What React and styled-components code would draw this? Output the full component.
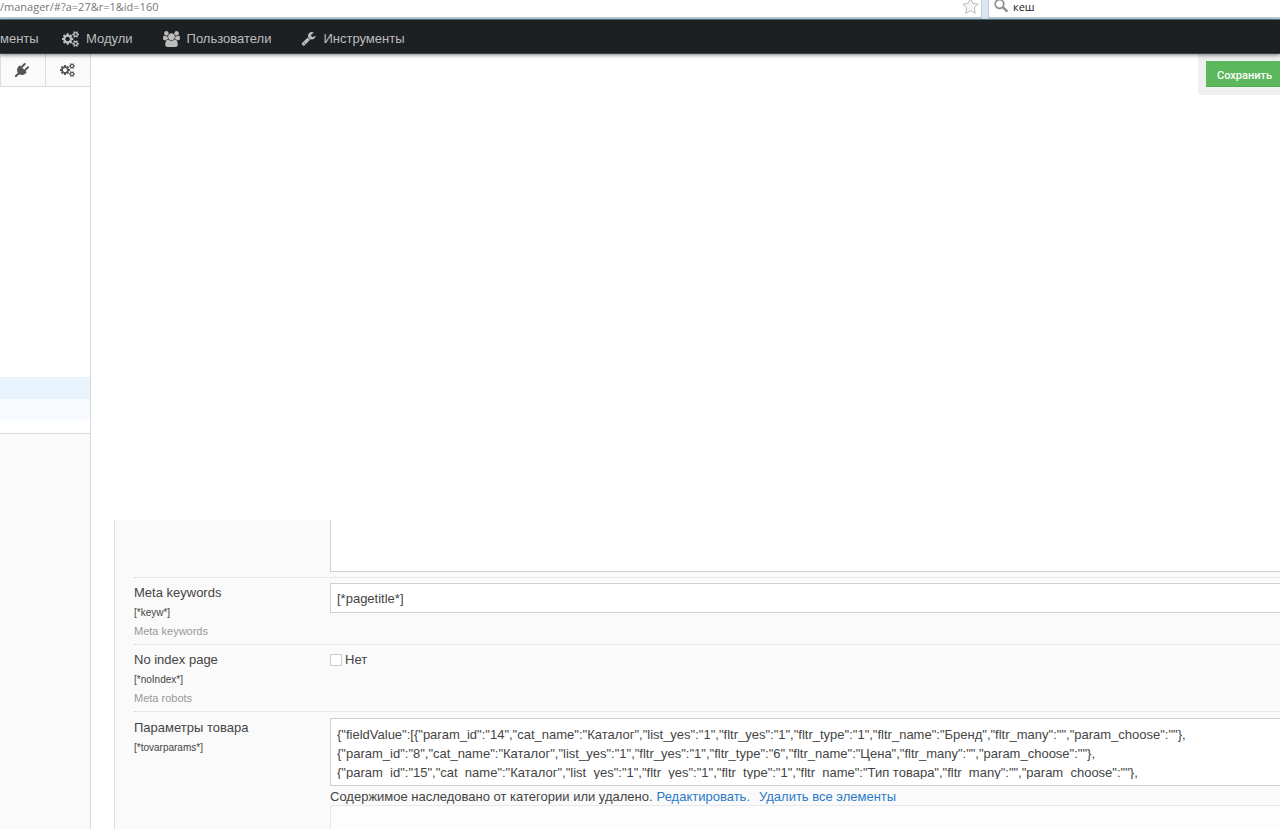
import React from 'react';
import styled, { createGlobalStyle } from 'styled-components';

const GlobalStyle = createGlobalStyle`
  *, *::before, *::after { box-sizing: border-box; }
  html, body { margin: 0; height: 100%; overflow: hidden; }
  #root { height: 100%; }
  body {
    background: #fff;
    color: #444;
    font-family: "Liberation Sans", Arial, sans-serif;
    font-size: 13px;
  }
  input, textarea, button { font: inherit; color: inherit; margin: 0; }
`;

const Page = styled.div`
  display: flex;
  flex-direction: column;
  height: 100%;
`;

const BrowserBar = styled.div`
  display: flex;
  flex: none;
  height: 20px;
  background: #dbe7f5;
  border-bottom: 1px solid #5c7684;
`;

const BarBox = styled.div`
  display: flex;
  align-items: flex-start;
  flex: ${(p) => (p.$grow ? '1' : '0 0 292px')};
  min-width: 0;
  background: #fff;
  border: solid #bccddb;
  border-width: ${(p) => (p.$grow ? '0 1px 2px 0' : '0 0 2px 1px')};
  margin-right: ${(p) => (p.$grow ? '6px' : '0')};
  padding: ${(p) => (p.$grow ? '0 2px 0 0' : '0 0 0 5px')};
  overflow: hidden;
`;

const BarInput = styled.input`
  flex: 1;
  min-width: 0;
  height: 14px;
  padding: 0;
  border: 0;
  outline: 0;
  background: transparent;
  color: ${(p) => p.$color};
  font-family: "Open Sans", sans-serif;
  font-size: 11px;
  line-height: 14px;
`;

const TopNav = styled.nav`
  position: relative;
  z-index: 2;
  display: flex;
  flex: none;
  gap: 30px;
  height: 34px;
  align-items: center;
  padding-top: 4px;
  background: #1d2023;
  border-bottom: 1px solid #3c3f41;
  box-shadow: 0 1px 4px rgba(0, 0, 0, 0.5);
`;

const NavLink = styled.a`
  display: flex;
  align-items: center;
  gap: 7px;
  color: #bdbdbd;
  text-decoration: none;
  line-height: 16px;
`;

const FirstNavLink = styled(NavLink)`
  flex: 0 0 32px;
  min-width: 0;
  white-space: nowrap;
`;

const Body = styled.div`
  display: flex;
  flex: 1;
  min-height: 0;
`;

const Sidebar = styled.aside`
  display: flex;
  flex-direction: column;
  flex: 0 0 91px;
  background: #fafafa;
  border-right: 1px solid #dcdcdc;
`;

const Tools = styled.div`
  display: flex;
  height: 33px;
  border-bottom: 1px solid #dcdcdc;
`;

const Tool = styled.button`
  display: flex;
  flex: 1;
  align-items: center;
  justify-content: center;
  padding: 0 2px 0 0;
  border: 0;
  border-left: 1px solid #dcdcdc;
  background: #fafafa;
  color: #555;
`;

const Tree = styled.div`
  height: 347px;
  padding-top: 290px;
  background: #fff;
  border-bottom: 1px solid #dcdcdc;
`;

const TreeRow = styled.div`
  height: ${(p) => (p.$active ? '22px' : '21px')};
  background: ${(p) => (p.$active ? '#e7f3fd' : '#f7fbff')};
`;

const Main = styled.main`
  display: flex;
  flex-direction: column;
  flex: 1;
  min-width: 0;
  padding-left: 23px;
`;

const Head = styled.header`
  display: flex;
  flex: none;
  justify-content: flex-end;
  align-items: flex-start;
  height: 466px;
`;

const Actions = styled.div`
  padding: 7px 0 8px 8px;
  background: #f0f0f0;
  border-bottom-left-radius: 3px;
`;

const SaveButton = styled.button`
  display: block;
  width: 74px;
  height: 26px;
  padding: 4px 0 0 11px;
  border: 1px solid #4cae4c;
  border-width: 0 0 1px;
  background: #5cb85c;
  color: #fff;
  font-family: Roboto, sans-serif;
  font-size: 11px;
  font-weight: 500;
  line-height: 20px;
  text-align: left;
`;

const Panel = styled.form`
  display: flex;
  flex-direction: column;
  flex: 1;
  min-height: 0;
  padding-left: 19px;
  background: #fafafa;
  border-left: 1px solid #dcdcdc;
  overflow: hidden;
`;

const Row = styled.div`
  display: flex;
  flex: none;
  padding: 5px 0;
  border-top: 1px dotted #d8d8d8;
`;

const FirstRow = styled(Row)`
  height: 57px;
  padding-top: 0;
  border-top: 0;
`;

const LastRow = styled(Row)`
  flex: 1;
  min-height: 0;
  padding: 6px 0 0;
`;

const LabelColumn = styled.div`
  flex: 0 0 196px;
`;

const Label = styled.label`
  display: block;
  line-height: 20px;
`;

const Code = styled.div`
  font-size: 10px;
  line-height: 20px;
`;

const Caption = styled.div`
  color: #999;
  font-size: 11px;
  line-height: 16px;
`;

const FieldColumn = styled.div`
  display: flex;
  flex-direction: column;
  flex: 1;
  min-width: 0;
`;

const TextField = styled.input`
  height: 30px;
  padding: 0 6px;
  border: 1px solid #d0d0d0;
  border-right: 0;
  background: #fff;
  outline: 0;
`;

const OpenArea = styled.textarea`
  height: 53px;
  border: 1px solid #d0d0d0;
  border-width: 0 0 1px 1px;
  background: #fff;
  resize: none;
  outline: 0;
`;

const AreaFrame = styled.div`
  flex: none;
  padding: 6px;
  border: 1px solid #d0d0d0;
  border-right: 0;
  background: #fff;
`;

const Area = styled.textarea`
  display: block;
  width: 100%;
  height: 54px;
  padding: 0;
  border: 0;
  background: transparent;
  line-height: 19px;
  white-space: pre;
  resize: none;
  outline: 0;
  overflow: hidden;
`;

const CheckLabel = styled.label`
  display: flex;
  align-items: center;
  gap: 3px;
  line-height: 20px;
`;

const Check = styled.input`
  appearance: none;
  width: 12px;
  height: 12px;
  border: 1px solid #ccc;
  background: #fff;
`;

const Note = styled.div`
  display: flex;
  flex: none;
  padding-top: 2px;
  line-height: 17px;
`;

const NoteLink = styled.a`
  margin-left: ${(p) => (p.$apart ? '9px' : '4px')};
  color: #2a7acb;
  text-decoration: none;
`;

const ItemsBox = styled.div`
  flex: 1;
  border: 1px solid #e8e8e8;
  border-width: 1px 0 0 1px;
  border-top-left-radius: 3px;
  background: #fdfdfd;
`;

const COG =
  'M896 896q0-106-75-181t-181-75-181 75-75 181 75 181 181 75 181-75 75-181zm768 512q0-52-38-90t-90-38-90 38-38 90q0 53 37.5 90.5t90.5 37.5 90.5-37.5 37.5-90.5zm0-1024q0-52-38-90t-90-38-90 38-38 90q0 53 37.5 90.5t90.5 37.5 90.5-37.5 37.5-90.5zm-384 421v185q0 10-7 19.5t-16 10.5l-155 24q-11 35-32 76 34 48 90 115 7 11 7 20 0 12-7 19-23 30-82.5 89.5t-78.5 59.5q-11 0-21-7l-115-90q-37 19-77 31-11 108-23 155-7 24-30 24h-186q-11 0-20-7.5t-10-17.5l-23-153q-34-10-75-31l-118 89q-7 7-20 7-11 0-21-8-144-133-144-160 0-9 7-19 10-14 41-53t47-61q-23-44-35-82l-152-24q-10-1-17-9.5t-7-19.5v-185q0-10 7-19.5t16-10.5l155-24q11-35 32-76-34-48-90-115-7-11-7-20 0-12 7-20 22-30 82-89t79-59q11 0 21 7l115 90q34-18 77-32 11-108 23-154 7-24 30-24h186q11 0 20 7.5t10 17.5l23 153q34 10 75 31l118-89q8-7 20-7 11 0 21 8 144 133 144 160 0 8-7 19-12 16-42 54t-45 60q23 48 34 82l152 23q10 2 17 10.5t7 19.5zm640 533v140q0 16-149 31-12 27-30 52 51 113 51 138 0 4-4 7-122 71-124 71-8 0-46-47t-52-68q-20 2-30 2t-30-2q-14 21-52 68t-46 47q-2 0-124-71-4-3-4-7 0-25 51-138-18-25-30-52-149-15-149-31v-140q0-16 149-31 13-29 30-52-51-113-51-138 0-4 4-7 4-2 35-20t59-34 30-16q8 0 46 46.5t52 67.5q20-2 30-2t30 2q51-71 92-112l6-2q4 0 124 70 4 3 4 7 0 25-51 138 17 23 30 52 149 15 149 31zm0-1024v140q0 16-149 31-12 27-30 52 51 113 51 138 0 4-4 7-122 71-124 71-8 0-46-47t-52-68q-20 2-30 2t-30-2q-14 21-52 68t-46 47q-2 0-124-71-4-3-4-7 0-25 51-138-18-25-30-52-149-15-149-31v-140q0-16 149-31 13-29 30-52-51-113-51-138 0-4 4-7 4-2 35-20t59-34 30-16q8 0 46 46.5t52 67.5q20-2 30-2t30 2q51-71 92-112l6-2q4 0 124 70 4 3 4 7 0 25-51 138 17 23 30 52 149 15 149 31z';
const USERS =
  'M593 896q-162 5-265 128h-134q-82 0-138-40.5t-56-118.5q0-353 124-353 6 0 43.5 21t97.5 42.5 119 21.5q67 0 133-23-5 37-5 66 0 139 81 256zm1071 637q0 120-73 189.5t-194 69.5h-874q-121 0-194-69.5t-73-189.5q0-53 3.5-103.5t14-109 26.5-108.5 43-97.5 62-81 85.5-53.5 111.5-20q10 0 43 21.5t73 48 107 48 135 21.5 135-21.5 107-48 73-48 43-21.5q61 0 111.5 20t85.5 53.5 62 81 43 97.5 26.5 108.5 14 109 3.5 103.5zm-1024-1277q0 106-75 181t-181 75-181-75-75-181 75-181 181-75 181 75 75 181zm704 384q0 159-112.5 271.5t-271.5 112.5-271.5-112.5-112.5-271.5 112.5-271.5 271.5-112.5 271.5 112.5 112.5 271.5zm576 225q0 78-56 118.5t-138 40.5h-134q-103-123-265-128 81-117 81-256 0-29-5-66 66 23 133 23 59 0 119-21.5t97.5-42.5 43.5-21q124 0 124 353zm-128-609q0 106-75 181t-181 75-181-75-75-181 75-181 181-75 181 75 75 181z';
const WRENCH =
  'M448 1472q0-26-19-45t-45-19-45 19-19 45 19 45 45 19 45-19 19-45zm644-420l-682 682q-37 37-90 37-52 0-91-37l-106-108q-38-36-38-90 0-53 38-91l681-681q39 98 114.5 173.5t173.5 114.5zm634-435q0 39-23 106-47 134-164.5 217.5t-258.5 83.5q-185 0-316.5-131.5t-131.5-316.5 131.5-316.5 316.5-131.5q58 0 121.5 16.5t107.5 46.5q16 11 16 28t-16 28l-293 169v224l193 107q5-3 79-48.5t135.5-81 70.5-35.5q15 0 23.5 10t8.5 25z';
const PLUG =
  'M1755 453q37 38 37 90.5t-37 90.5l-401 400 150 150-160 160q-163 163-389.5 186.5t-411.5-100.5l-362 362h-181v-181l362-362q-124-185-100.5-411.5t186.5-389.5l160-160 150 150 400-401q38-37 91-37t90 37 37 90.5-37 90.5l-400 401 234 234 401-400q38-37 91-37t90 37z';

const Glyph = ({ d, wide, size }) => (
  <svg
    width={wide ? Math.round((size * 15) / 14) : size}
    height={size}
    viewBox={wide ? '0 0 1920 1792' : '0 0 1792 1792'}
    fill="currentColor"
    aria-hidden="true"
  >
    <path d={d} />
  </svg>
);

const StarIcon = () => (
  <svg width="17" height="15" viewBox="0 0 17 15" fill="#f6f6f6" stroke="#bbb" aria-hidden="true">
    <path d="M8.500 -1.500l2.300 5 5.400.6-4 3.700 1.100 5.500-4.800-2.700-4.800 2.700 1.100-5.500-4-3.700 5.400-.6z" />
  </svg>
);

const SearchIcon = () => (
  <svg width="19" height="14" viewBox="0 0 19 14" fill="none" stroke="#8f8f8f" aria-hidden="true">
    <circle cx="5.500" cy="4" r="4.300" strokeWidth="1.700" />
    <path d="M8.800 7.200l4.600 4.400" strokeWidth="2.400" />
  </svg>
);

const PARAMS = [
  '{"fieldValue":[{"param_id":"14","cat_name":"Каталог","list_yes":"1","fltr_yes":"1","fltr_type":"1","fltr_name":"Бренд","fltr_many":"","param_choose":""},',
  '{"param_id":"8","cat_name":"Каталог","list_yes":"1","fltr_yes":"1","fltr_type":"6","fltr_name":"Цена","fltr_many":"","param_choose":""},',
  '{"param_id":"15","cat_name":"Каталог","list_yes":"1","fltr_yes":"1","fltr_type":"1","fltr_name":"Тип товара","fltr_many":"","param_choose":""},',
].join('\n');

export default function App() {
  return (
    <Page>
      <GlobalStyle />
      <BrowserBar>
        <BarBox $grow>
          <BarInput aria-label="Адрес" $color="#777" defaultValue="/manager/#?a=27&r=1&id=160" />
          <StarIcon />
        </BarBox>
        <BarBox>
          <SearchIcon />
          <BarInput aria-label="Поиск" $color="#222" defaultValue="кеш" />
        </BarBox>
      </BrowserBar>

      <TopNav>
        <FirstNavLink href="#elements">менты</FirstNavLink>
        <NavLink href="#modules">
          <Glyph d={COG} wide size={16} />
          Модули
        </NavLink>
        <NavLink href="#users">
          <Glyph d={USERS} wide size={16} />
          Пользователи
        </NavLink>
        <NavLink href="#tools">
          <Glyph d={WRENCH} size={15} />
          Инструменты
        </NavLink>
      </TopNav>

      <Body>
        <Sidebar>
          <Tools>
            <Tool type="button" aria-label="Плагины">
              <Glyph d={PLUG} size={14} />
            </Tool>
            <Tool type="button" aria-label="Модули">
              <Glyph d={COG} wide size={14} />
            </Tool>
          </Tools>
          <Tree>
            <TreeRow $active />
            <TreeRow />
          </Tree>
        </Sidebar>

        <Main>
          <Head>
            <Actions>
              <SaveButton type="submit" form="document">Сохранить</SaveButton>
            </Actions>
          </Head>
          <Panel id="document" onSubmit={(e) => e.preventDefault()}>
            <FirstRow>
              <LabelColumn />
              <FieldColumn>
                <OpenArea aria-label="Meta description" />
              </FieldColumn>
            </FirstRow>
            <Row>
              <LabelColumn>
                <Label htmlFor="keyw">Meta keywords</Label>
                <Code>[*keyw*]</Code>
                <Caption>Meta keywords</Caption>
              </LabelColumn>
              <FieldColumn>
                <TextField id="keyw" type="text" defaultValue="[*pagetitle*]" />
              </FieldColumn>
            </Row>
            <Row>
              <LabelColumn>
                <Label htmlFor="noindex">No index page</Label>
                <Code>[*noIndex*]</Code>
                <Caption>Meta robots</Caption>
              </LabelColumn>
              <FieldColumn>
                <CheckLabel>
                  <Check id="noindex" type="checkbox" />
                  Нет
                </CheckLabel>
              </FieldColumn>
            </Row>
            <LastRow>
              <LabelColumn>
                <Label htmlFor="tovarparams">Параметры товара</Label>
                <Code>[*tovarparams*]</Code>
              </LabelColumn>
              <FieldColumn>
                <AreaFrame>
                  <Area id="tovarparams" defaultValue={PARAMS} />
                </AreaFrame>
                <Note>
                  Содержимое наследовано от категории или удалено.
                  <NoteLink href="#edit">Редактировать.</NoteLink>
                  <NoteLink href="#clear" $apart>Удалить все элементы</NoteLink>
                </Note>
                <ItemsBox />
              </FieldColumn>
            </LastRow>
          </Panel>
        </Main>
      </Body>
    </Page>
  );
}
